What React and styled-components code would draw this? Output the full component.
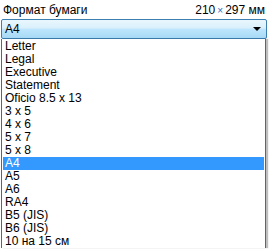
import styled, { createGlobalStyle } from 'styled-components';

const GlobalStyle = createGlobalStyle`
  body {
    margin: 0;
    background: #ffffff;
    font-family: "Liberation Sans", Arial, sans-serif;
    font-size: 11px;
    color: #000;
  }
`;

const Panel = styled.div`
  width: 270px;
  height: 250px;
  overflow: hidden;
  padding: 3px 3px 0 1px;
  box-sizing: border-box;
`;

const Header = styled.div`
  display: flex;
  justify-content: space-between;
  align-items: baseline;
  height: 16px;
  padding: 0 2px 0 2px;
`;

const Label = styled.span`
  font-size: 12px;
`;

const Size = styled.span`
  font-size: 12px;

  b {
    font-weight: normal;
    color: #2a6fc9;
    font-size: 10px;
    margin: 0 2px;
  }
`;

const Combo = styled.div`
  display: flex;
  align-items: center;
  justify-content: space-between;
  height: 20px;
  box-sizing: border-box;
  border: 1px solid #3c7fb1;
  border-radius: 2px;
  background: linear-gradient(#eaf6fd 0%, #d9f0fc 45%, #bee6fd 50%, #a7d9f5 100%);
  padding: 0 5px 0 3px;
  font-size: 12px;
`;

const Arrow = styled.span`
  width: 0;
  height: 0;
  border-left: 4px solid transparent;
  border-right: 4px solid transparent;
  border-top: 4px solid #000;
`;

const List = styled.ul`
  list-style: none;
  margin: 0 1px 0 0;
  padding: 1px 1px 0 1px;
  border-left: 1px solid #646464;
  border-right: 1px solid #646464;
  box-shadow: 2px 0 1px rgba(0, 0, 0, 0.25);
`;

const Item = styled.li`
  height: 13px;
  line-height: 13px;
  padding-left: 2px;
  font-size: 12px;
  background: ${({ $active }) => ($active ? '#3399ff' : 'transparent')};
  color: ${({ $active }) => ($active ? '#fff' : '#000')};
`;

const sizes = [
  'Letter',
  'Legal',
  'Executive',
  'Statement',
  'Oficio 8.5 x 13',
  '3 x 5',
  '4 x 6',
  '5 x 7',
  '5 x 8',
  'A4',
  'A5',
  'A6',
  'RA4',
  'B5 (JIS)',
  'B6 (JIS)',
  '10 на 15 см',
];

export default function App() {
  return (
    <>
      <GlobalStyle />
      <Panel>
        <Header>
          <Label>Формат бумаги</Label>
          <Size>
            210<b>×</b>297 мм
          </Size>
        </Header>
        <Combo>
          <span>A4</span>
          <Arrow />
        </Combo>
        <List>
          {sizes.map((s) => (
            <Item key={s} $active={s === 'A4'}>
              {s}
            </Item>
          ))}
        </List>
      </Panel>
    </>
  );
}
